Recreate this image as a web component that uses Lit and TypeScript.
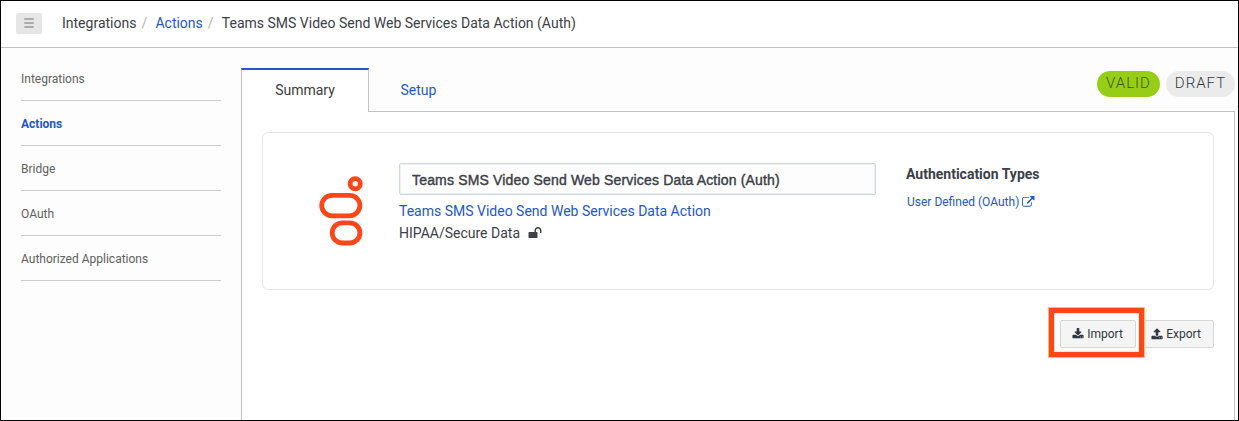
import { LitElement, html, css, svg } from "lit";
import { customElement, state } from "lit/decorators.js";
import { classMap } from "lit/directives/class-map.js";

const ICONS: Record<string, string> = {
  download:
    "M1344 1344q0-26-19-45t-45-19-45 19-19 45 19 45 45 19 45-19 19-45zm256 0q0-26-19-45t-45-19-45 19-19 45 19 45 45 19 45-19 19-45zm128-224v320q0 40-28 68t-68 28h-1472q-40 0-68-28t-28-68v-320q0-40 28-68t68-28h465l135 136q58 56 136 56t136-56l136-136h464q40 0 68 28t28 68zm-325-569q17 41-14 70l-448 448q-18 19-45 19t-45-19l-448-448q-31-29-14-70 17-39 59-39h256v-448q0-26 19-45t45-19h256q26 0 45 19t19 45v448h256q42 0 59 39z",
  upload:
    "M1344 1472q0-26-19-45t-45-19-45 19-19 45 19 45 45 19 45-19 19-45zm256 0q0-26-19-45t-45-19-45 19-19 45 19 45 45 19 45-19 19-45zm128-224v320q0 40-28 68t-68 28h-1472q-40 0-68-28t-28-68v-320q0-40 28-68t68-28h427q21 56 70.5 92t110.5 36h256q61 0 110.5-36t70.5-92h427q40 0 68 28t28 68zm-325-648q-17 40-59 40h-256v448q0 26-19 45t-45 19h-256q-26 0-45-19t-19-45v-448h-256q-42 0-59-40-17-39 14-69l448-448q18-19 45-19t45 19l448 448q31 30 14 69z",
  external:
    "M1408 928v320q0 119-84.5 203.5t-203.5 84.5h-832q-119 0-203.5-84.5t-84.5-203.5v-832q0-119 84.5-203.5t203.5-84.5h704q14 0 23 9t9 23v64q0 14-9 23t-23 9h-704q-66 0-113 47t-47 113v832q0 66 47 113t113 47h832q66 0 113-47t47-113v-320q0-14 9-23t23-9h64q14 0 23 9t9 23zm384-864v512q0 26-19 45t-45 19-45-19l-176-176-652 652q-10 10-23 10t-23-10l-114-114q-10-10-10-23t10-23l652-652-176-176q-19-19-19-45t19-45 45-19h512q26 0 45 19t19 45z",
  unlock:
    "M1728 576v256q0 26-19 45t-45 19h-64q-26 0-45-19t-19-45v-256q0-106-75-181t-181-75-181 75-75 181v192h96q40 0 68 28t28 68v576q0 40-28 68t-68 28h-960q-40 0-68-28t-28-68v-576q0-40 28-68t68-28h672v-192q0-185 131.5-316.5t316.5-131.5 316.5 131.5 131.5 316.5z",
};

const icon = (name: string) =>
  html`<svg class="icon ${name}" viewBox="0 0 1792 1792" aria-hidden="true">${svg`<path d=${ICONS[name]} />`}</svg>`;

@customElement("app-root")
export class AppRoot extends LitElement {
  static styles = css`
    :host {
      display: block;
      height: 421px;
      font-family: Roboto, "Liberation Sans", sans-serif;
      font-size: 14px;
      color: #3c4048;
    }
    * { box-sizing: border-box; }
    a { color: #2457c9; text-decoration: none; }
    .icon { display: block; width: 14px; height: 14px; fill: currentColor; flex: none; overflow: visible; }
    .frame { height: 100%; border: 1px solid #000; background: #fdfdfd; display: flex; flex-direction: column; }
    .header {
      height: 47px; flex: none; display: flex; align-items: center; padding: 0 0 2px 15px;
      background: #fff; border-bottom: 1px solid #c2c2c2; line-height: 20px;
    }
    .menu {
      width: 26px; height: 21px; margin-right: 20px; padding: 0; border: 0; border-radius: 2px; background: #e6e6e6;
      display: flex; flex-direction: column; justify-content: center; align-items: center; gap: 2px;
    }
    .menu i { display: block; width: 10px; height: 2px; background: #acacac; border-radius: 1px; }
    .crumb { white-space: nowrap; }
    .sep { color: #b4b4b4; width: 19px; padding-left: 5px; }
    .body { flex: 1; min-height: 0; display: flex; }
    .side { width: 240px; flex: none; padding: 8px 20px 0; }
    .side a {
      display: block; height: 45px; padding-top: 15px; line-height: 16px; font-size: 12px; color: #606060;
      border-bottom: 1px solid #cccccc;
    }
    .side a.active { color: #2457c9; font-weight: 700; }
    .main { flex: 1; padding: 20px 3px 0 0; display: flex; flex-direction: column; min-width: 0; }
    .tabs { display: flex; height: 44px; flex: none; }
    .tab { display: flex; justify-content: center; align-items: center; width: 128px; line-height: 20px; }
    .tab.on {
      border: 1px solid #c2c2c2; border-top: 2px solid #2457c9; border-bottom: 0; background: #fff; color: #3c3c3c;
      padding-bottom: 2px;
    }
    .rest { flex: 1; border-bottom: 1px solid #c2c2c2; display: flex; }
    .rest .tab { width: 99px; }
    .badges { margin-left: auto; padding-top: 3px; display: flex; gap: 6px; }
    .badge {
      height: 26px; border-radius: 13px; line-height: 25px; text-align: center; font-size: 15px; font-weight: 300;
      letter-spacing: 1px;
    }
    .valid { width: 63px; background: #97cd17; color: #3a5a1c; }
    .draft { width: 69px; background: #ebebeb; color: #333a45; }
    .panel {
      flex: 1; background: #fff; border: 1px solid #c2c2c2; border-width: 0 1px; padding: 20px 20px 0;
      display: flex; flex-direction: column;
    }
    .card {
      height: 158px; flex: none; border: 1px solid #e5e5e5; border-radius: 6px; background: #fff;
      display: flex; padding-top: 30px;
    }
    .logo { display: block; width: 48px; height: 74px; margin: 12px 0 0 54px; flex: none; }
    .info { width: 477px; margin-left: 34px; flex: none; }
    .name {
      display: block; width: 100%; height: 32px; padding: 2px 12px 0; border: 1px solid #d0d8de; border-radius: 2px;
      background: #fdfdfd; box-shadow: inset 0 0 0 1px #eef1f4; font: 14px "Liberation Sans", sans-serif;
      letter-spacing: 0.17px; color: #3c4048; -webkit-text-stroke: 0.4px #3c4048; outline: 0;
    }
    .link { display: block; margin-top: 6px; line-height: 20px; }
    .hipaa { display: flex; align-items: center; gap: 8px; line-height: 20px; margin-top: 2px; }
    .auth { margin-left: 30px; }
    .title { font-weight: 700; line-height: 20px; margin-top: 1px; }
    .auth a { display: flex; align-items: center; gap: 3px; font-size: 12px; line-height: 16px; margin: 10px 0 0 1px; }
    .external { width: 12.5px; height: 12.5px; }
    .actions { display: flex; justify-content: flex-end; gap: 2px; margin-top: 30px; }
    .btn {
      position: relative; width: 76px; height: 28px; border: 1px solid #d6d6d6; border-radius: 2px;
      background: #f5f5f5; color: #32363e; font: 12px/16px Roboto, sans-serif; padding: 0 1px 0 0;
      display: flex; justify-content: center; align-items: center; gap: 3px;
    }
    .export { padding-right: 0; }
    .btn .icon { width: 12px; height: 12px; }
    .mark {
      position: absolute; left: -13px; top: -14px; width: 97px; height: 51px; z-index: 2;
      border: 6px solid #ff451a; outline: 1px solid #ffc06b; outline-offset: -1px;
      box-shadow: inset 0 0 0 1px #ffe9cf; pointer-events: none;
    }
  `;

  @state() private section = "Actions";

  private sections = ["Integrations", "Actions", "Bridge", "OAuth", "Authorized Applications"];

  render() {
    return html`
      <div class="frame">
        <header class="header">
          <button class="menu" aria-label="Menu"><i></i><i></i><i></i></button>
          <span class="crumb">Integrations</span><span class="sep">/</span>
          <a class="crumb" href="#">Actions</a><span class="sep">/</span>
          <span class="crumb">Teams SMS Video Send Web Services Data Action (Auth)</span>
        </header>
        <div class="body">
          <nav class="side">
            ${this.sections.map(
              (s) => html`<a href="#" class=${classMap({ active: s === this.section })} @click=${() => (this.section = s)}>${s}</a>`
            )}
          </nav>
          <main class="main">
            <div class="tabs">
              <div class="tab on">Summary</div>
              <div class="rest">
                <a class="tab" href="#">Setup</a>
                <div class="badges">
                  <span class="badge valid">VALID</span>
                  <span class="badge draft">DRAFT</span>
                </div>
              </div>
            </div>
            <section class="panel">
              <div class="card">
                <svg class="logo" viewBox="0 0 48 74" fill="none" stroke="#ff451a" stroke-width="4.8">
                  <circle cx="38.2" cy="8.8" r="5.1" />
                  <rect x="4.7" y="20.4" width="38.2" height="20.4" rx="10.2" />
                  <rect x="15.2" y="47.8" width="27.7" height="20.2" rx="10.1" />
                </svg>
                <div class="info">
                  <input class="name" .value=${"Teams SMS Video Send Web Services Data Action (Auth)"} />
                  <a class="link" href="#">Teams SMS Video Send Web Services Data Action</a>
                  <div class="hipaa"><span>HIPAA/Secure Data</span>${icon("unlock")}</div>
                </div>
                <div class="auth">
                  <div class="title">Authentication Types</div>
                  <a href="#"><span>User Defined (OAuth)</span>${icon("external")}</a>
                </div>
              </div>
              <div class="actions">
                <button class="btn">${icon("download")}<span>Import</span><span class="mark"></span></button>
                <button class="btn export">${icon("upload")}<span>Export</span></button>
              </div>
            </section>
          </main>
        </div>
      </div>
    `;
  }
}
